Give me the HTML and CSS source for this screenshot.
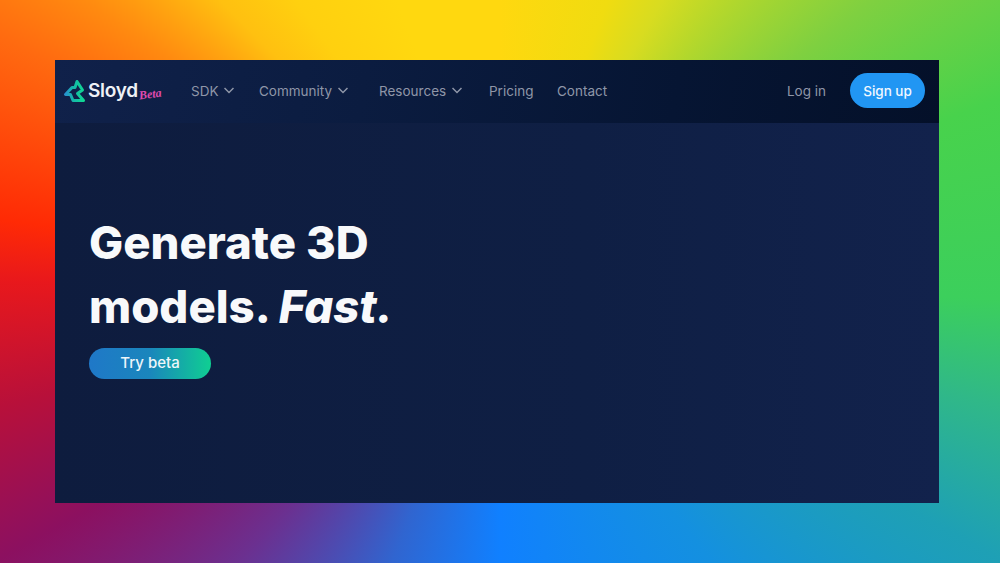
FILE: index.html
```html
<!DOCTYPE html>
<html>
<head>
    <title>Sloyd</title>
    <link rel="stylesheet" href="styles.css">
</head>
<body>
    <div class="frame">
        <header class="nav">
            <a class="logo">
                <svg class="logoMark" width="24" height="26" viewBox="0 0 24 26" fill="none">
                    <defs>
                        <linearGradient id="logoGrad" gradientUnits="userSpaceOnUse" x1="1" y1="14" x2="22" y2="14">
                            <stop offset="0" stop-color="#2a8cd4"/>
                            <stop offset="0.45" stop-color="#14b8a8"/>
                            <stop offset="1" stop-color="#10dc90"/>
                        </linearGradient>
                    </defs>
                    <path d="M2.5 16.5 L9 9.5 H12 L14 3.5 L19.5 12 L14.5 15.5 L20.5 22.5 H10 L7.5 16.5 H4" stroke="url(#logoGrad)" stroke-width="3" stroke-linejoin="round" stroke-linecap="round"/>
                </svg>
                <span class="logoName">Sloyd</span>
                <span class="logoBeta">Beta</span>
            </a>
            <nav class="links">
                <a class="link">SDK
                    <svg class="chev" width="10" height="7" viewBox="0 0 10 7"><path d="M0.5 1 L5 5.5 L9.5 1" /></svg>
                </a>
                <a class="link">Community
                    <svg class="chev" width="10" height="7" viewBox="0 0 10 7"><path d="M0.5 1 L5 5.5 L9.5 1" /></svg>
                </a>
                <a class="link">Resources
                    <svg class="chev" width="10" height="7" viewBox="0 0 10 7"><path d="M0.5 1 L5 5.5 L9.5 1" /></svg>
                </a>
                <a class="link">Pricing</a>
                <a class="link">Contact</a>
            </nav>
            <div class="actions">
                <a class="link">Log in</a>
                <a class="signup">Sign up</a>
            </div>
        </header>
        <section class="hero">
            <h1>Generate 3D<br>models. <em>Fast.</em></h1>
            <a class="tryBeta">Try beta</a>
        </section>
    </div>
</body>
</html>
```
FILE: styles.css
```css
html, body {
    height: 100%;
}

body {
    margin: 0;
    box-sizing: border-box;
    height: 563px;
    padding: 60px 61px 60px 55px;
    overflow: hidden;
    font-family: "Inter", "Open Sans", sans-serif;
    background: conic-gradient(from 0deg at 50% 50%,
        #ffd80f 0deg,
        #f0dc10 21deg,
        #d8dc20 30deg,
        #b8d82a 38deg,
        #7fd040 53deg,
        #48d24c 70deg,
        #3ccf5c 92deg,
        #30b888 104deg,
        #1ea0b5 119deg,
        #1490e0 143deg,
        #1080ff 180deg,
        #3065d0 201deg,
        #6b3090 223deg,
        #8c1060 241deg,
        #b8103a 256deg,
        #e8181c 270deg,
        #ff2a05 277deg,
        #ff6a10 296deg,
        #ff8a10 304deg,
        #ffc010 315deg,
        #ffd00f 324deg,
        #ffd80f 340deg,
        #ffd80f 360deg);
}

.frame {
    height: 100%;
    display: flex;
    flex-direction: column;
    background: linear-gradient(90deg, #0e1c3e 0%, #0f1f44 60%, #12224c 100%);
}

.nav {
    height: 63px;
    box-sizing: border-box;
    padding: 0 14px 2px 8px;
    display: flex;
    align-items: center;
    background: linear-gradient(100deg, #10214a 0%, #0b1c40 35%, #061533 70%, #041029 100%);
}

.logo {
    display: flex;
    align-items: center;
    width: 128px;
}

.logoMark {
    flex: none;
}

.logoName {
    margin-left: 1px;
    font-size: 19px;
    font-weight: 600;
    color: #eef1f6;
    letter-spacing: -0.3px;
}

.logoBeta {
    margin: 8px 0 0 1px;
    font-family: "Liberation Serif", serif;
    font-style: italic;
    font-weight: 700;
    font-size: 12px;
    color: #e04bb0;
    transform: rotate(-8deg);
}

.links {
    display: grid;
    grid-template-columns: 68px 120px 110px 68px auto;
    flex: 1;
}

.link {
    display: flex;
    align-items: center;
    gap: 6px;
    font-size: 13.5px;
    color: #8f96a8;
}

.chev {
    fill: none;
    stroke: #8f96a8;
    stroke-width: 1.5;
}

.actions {
    display: flex;
    align-items: center;
    gap: 24px;
}

.signup {
    width: 75px;
    height: 35px;
    display: flex;
    align-items: center;
    justify-content: center;
    border-radius: 18px;
    background: #2196f3;
    color: #f2f8ff;
    font-size: 13.5px;
    font-weight: 500;
}

.hero {
    flex: 1;
    padding: 88px 34px 0;
}

h1 {
    margin: 0;
    font-size: 45.5px;
    font-weight: 800;
    line-height: 64px;
    color: #f8f9fb;
}

.tryBeta {
    width: 122px;
    height: 31px;
    margin-top: 9px;
    padding-bottom: 2px;
    box-sizing: border-box;
    display: flex;
    align-items: center;
    justify-content: center;
    border-radius: 16px;
    background: linear-gradient(90deg, #1f78c8 0%, #1a86bc 50%, #0fcf92 100%);
    color: #eef6fa;
    font-size: 15px;
    font-weight: 500;
}
```
